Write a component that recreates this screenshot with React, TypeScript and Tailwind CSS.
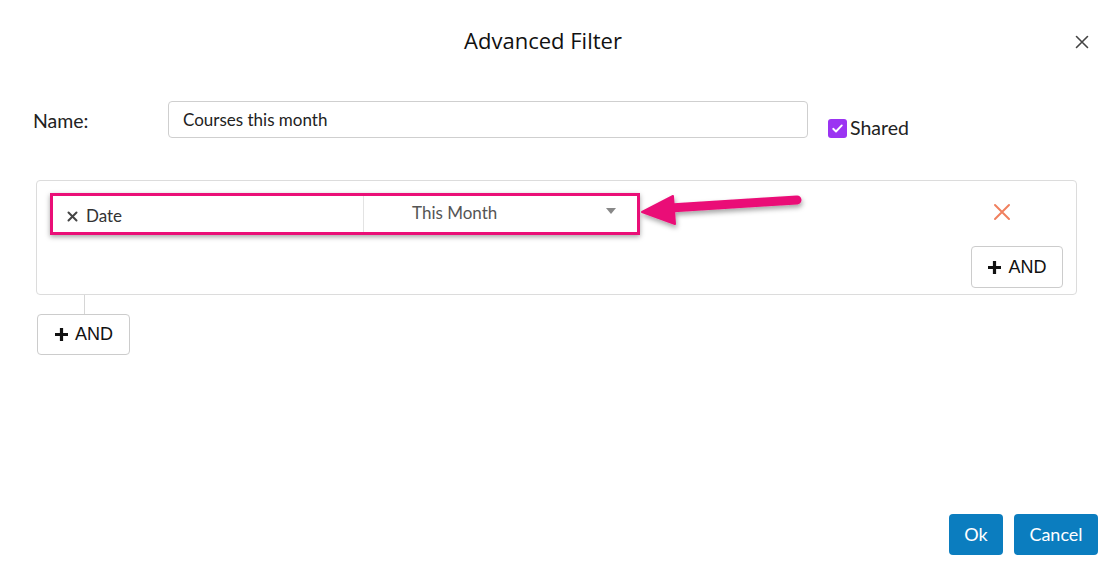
import React from "react";

export default function App() {
  return (
    <div className="relative w-[1111px] h-[569px] bg-white overflow-hidden" style={{ fontFamily: "Lato, 'Open Sans', sans-serif" }}>
      {/* Header */}
      <div className="relative h-[80px] flex justify-center pt-[25px] pr-[25px]">
        <div className="text-[22px] text-[#111] leading-[30px]" style={{ fontFamily: "'Open Sans', sans-serif" }}>Advanced Filter</div>
        <button className="absolute left-[1074px] top-[34px] w-[16px] h-[16px] flex items-center justify-center">
          <svg width="14" height="14" viewBox="0 0 14 14"><path d="M1.5 1.5 L12.5 12.5 M12.5 1.5 L1.5 12.5" stroke="#444" strokeWidth="1.6" strokeLinecap="round" /></svg>
        </button>
      </div>

      {/* Name row */}
      <div className="flex items-start pl-[33px] mt-[21px] h-[37px]">
        <div className="w-[135px] text-[19.5px] text-[#222] leading-[37px] pt-[1px]">Name:</div>
        <div className="w-[640px] h-[37px] border border-[#cfcfcf] rounded-[4px] px-[14px] flex items-center text-[17px] text-[#222]">Courses this month</div>
        <div className="ml-[20px] mt-[17px] flex items-center">
          <div className="w-[19px] h-[19px] rounded-[3px] bg-[#9b34f2] flex items-center justify-center">
            <svg width="13" height="13" viewBox="0 0 13 13"><path d="M2.2 6.8 L5 9.5 L10.8 3.4" stroke="white" strokeWidth="1.9" fill="none" strokeLinecap="round" strokeLinejoin="round" /></svg>
          </div>
          <span className="ml-[3px] text-[19.5px] text-[#222] leading-[20px]">Shared</span>
        </div>
      </div>

      {/* Filter group */}
      <div className="ml-[36px] mt-[42px] w-[1041px] h-[115px] border border-[#dcdcdc] rounded-[4px] flex">
        <div className="pl-[13px] pt-[12px]">
          <div className="w-[590px] h-[42px] border-[3px] border-[#ea0f77] flex shadow-[0_2px_5px_rgba(0,0,0,0.35)]">
            <div className="w-[311px] flex items-center pl-[14px] text-[17px] text-[#333] border-r border-[#e3e3e3] pt-[4px]">
              <svg width="11" height="11" viewBox="0 0 11 11" className="mr-[8px]"><path d="M1.5 1.5 L9.5 9.5 M9.5 1.5 L1.5 9.5" stroke="#444" strokeWidth="2" strokeLinecap="round" /></svg>
              Date
            </div>
            <div className="flex-1 flex items-start pt-[4px] relative">
              <div className="pl-[48px] text-[17px] text-[#555]">This Month</div>
              <svg width="10" height="6" viewBox="0 0 10 6" className="absolute left-[242px] top-[12px]"><path d="M0 0 L10 0 L5 6 Z" fill="#888" /></svg>
            </div>
          </div>
        </div>
        <div className="flex-1 flex flex-col items-end pr-[13px] pt-[22px]">
          <div className="mr-[52px]">
            <svg width="18" height="18" viewBox="0 0 18 18"><path d="M2 2 L16 16 M16 2 L2 16" stroke="#f0805f" strokeWidth="2" strokeLinecap="round" /></svg>
          </div>
          <button className="mt-[25px] w-[92px] h-[42px] border border-[#cccccc] rounded-[4px] flex items-center justify-center gap-[6px] text-[18px] text-[#111]" style={{ fontFamily: "'Liberation Sans', Arial, sans-serif" }}>
            <svg width="15" height="15" viewBox="0 0 15 15"><path d="M7.5 1 V14 M1 7.5 H14" stroke="#111" strokeWidth="3.2" /></svg>
            AND
          </button>
        </div>
      </div>

      {/* connector + bottom AND */}
      <div className="ml-[84px] w-px h-[19px] bg-[#d6d6d6]" />
      <button className="ml-[37px] w-[93px] h-[41px] border border-[#cccccc] rounded-[4px] flex items-center justify-center gap-[6px] text-[18px] text-[#111]" style={{ fontFamily: "'Liberation Sans', Arial, sans-serif" }}>
        <svg width="15" height="15" viewBox="0 0 15 15"><path d="M7.5 1 V14 M1 7.5 H14" stroke="#111" strokeWidth="3.2" /></svg>
        AND
      </button>

      {/* Footer buttons */}
      <div className="absolute right-[13px] bottom-[14px] flex gap-[11px]">
        <button className="w-[54px] h-[41px] rounded-[4px] bg-[#0b7dbf] text-white text-[18px]">Ok</button>
        <button className="w-[84px] h-[41px] rounded-[4px] bg-[#0b7dbf] text-white text-[18px]">Cancel</button>
      </div>

      {/* Annotation arrow */}
      <svg className="absolute left-0 top-0 pointer-events-none" width="1111" height="569">
        <defs>
          <filter id="sh" x="-20%" y="-50%" width="140%" height="200%">
            <feDropShadow dx="1" dy="3" stdDeviation="2.5" floodColor="#000" floodOpacity="0.35" />
          </filter>
        </defs>
        <g filter="url(#sh)">
          <path d="M797 200 L670 208" stroke="#ea0f77" strokeWidth="9" strokeLinecap="round" fill="none" />
          <path d="M642 212 L673 196 L675 224 Z" fill="#ea0f77" stroke="#ea0f77" strokeWidth="2" strokeLinejoin="round" />
        </g>
      </svg>
    </div>
  );
}
